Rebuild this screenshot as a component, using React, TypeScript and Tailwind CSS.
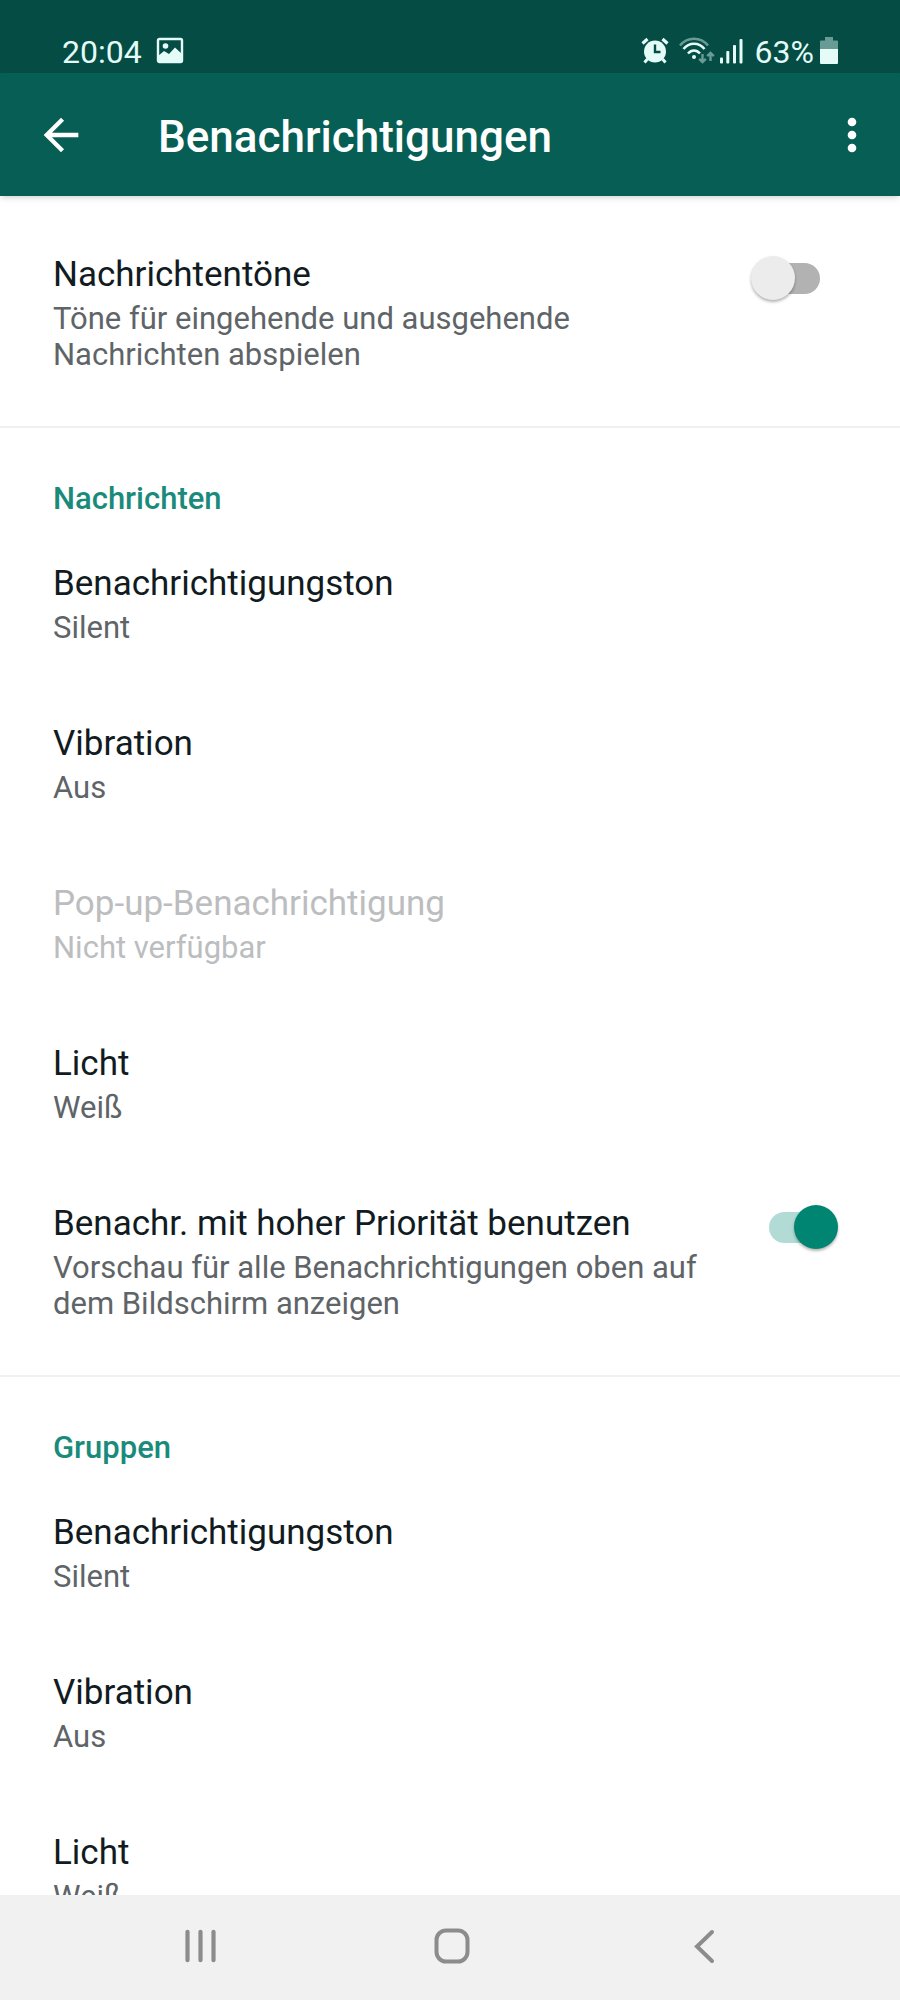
import { useState } from 'react'
import { MdArrowBack, MdMoreVert } from 'react-icons/md'

type Option = {
  title: string
  value: string
  disabled?: boolean
}

const messageOptions: Option[] = [
  { title: 'Benachrichtigungston', value: 'Silent' },
  { title: 'Vibration', value: 'Aus' },
  { title: 'Pop-up-Benachrichtigung', value: 'Nicht verfügbar', disabled: true },
  { title: 'Licht', value: 'Weiß' },
]

const groupOptions: Option[] = [
  { title: 'Benachrichtigungston', value: 'Silent' },
  { title: 'Vibration', value: 'Aus' },
  { title: 'Licht', value: 'Weiß' },
]

function StatusBar() {
  return (
    <div className="flex h-[73px] shrink-0 items-end justify-between bg-[#054d44] px-[62px] pb-2 text-[32px] leading-[26px] text-[#e4fbf8]">
      <div className="flex items-end gap-3.5">
        <span>20:04</span>
        {/* picture */}
        <svg width="28" height="28" viewBox="0 0 28 28" fill="none">
          <rect x="2" y="2" width="24" height="23" rx="1.5" stroke="currentColor" strokeWidth="2.4" />
          <circle cx="9.5" cy="9" r="2.8" fill="currentColor" />
          <path d="M2 19l6-5 5 3 6-6.5 7 6.500V25H2z" fill="currentColor" />
        </svg>
      </div>
      <div className="flex items-end">
        {/* alarm */}
        <svg width="28" height="28" viewBox="0 0 28 28" fill="none" className="mr-2.5">
          <path d="M1.500 6.500L6.500 2M26.500 6.500L21.500 2" stroke="currentColor" strokeWidth="3.200" />
          <path d="M6.500 22L3.500 25.500M21.500 22l3 3.500" stroke="currentColor" strokeWidth="3" />
          <circle cx="14" cy="14.500" r="11" fill="currentColor" />
          <path d="M14 7.500V15h5.500" stroke="#054d44" strokeWidth="2.400" />
        </svg>
        {/* wifi */}
        <svg width="36" height="28" viewBox="0 0 36 28" fill="none" className="mr-1">
          <g stroke="currentColor" strokeWidth="2.500">
            <path d="M1 8.500C8.500-.5 21.500-.5 29 8.500" opacity=".45" />
            <path d="M4.500 12c5.500-7 15.500-7 21 0" />
            <path d="M9 16.500c3.500-4 8.500-4 12 0" />
          </g>
          <circle cx="15" cy="20" r="2" fill="currentColor" />
          <g stroke="currentColor" strokeWidth="2.400" opacity=".45">
            <path d="M23.500 17v8M20.200 21.800l3.300 3.300 3.300-3.300" />
            <path d="M31.500 24v-8M28.200 19.200l3.300-3.300 3.300 3.300" />
          </g>
        </svg>
        {/* mobile signal */}
        <svg width="24" height="28" viewBox="0 0 24 28" fill="currentColor" className="mr-3">
          <rect x="1" y="20.500" width="3" height="6" rx="1" />
          <rect x="7.300" y="14" width="3" height="12.500" rx="1" />
          <rect x="14" y="8" width="3" height="18.500" rx="1" />
          <rect x="20.500" y="2" width="3" height="24.500" rx="1" />
        </svg>
        <span className="mr-1.5">63%</span>
        {/* battery */}
        <svg width="18" height="28" viewBox="0 0 18 28" fill="currentColor">
          <path d="M5 0h8v3.500h4a1 1 0 011 1V12H0V4.500a1 1 0 011-1h4z" opacity=".45" />
          <path d="M0 12h18v14a1 1 0 01-1 1H1a1 1 0 01-1-1z" />
        </svg>
      </div>
    </div>
  )
}

function Header() {
  return (
    <header className="z-10 flex h-[123px] shrink-0 items-center bg-[#075e54] pr-[22px] pl-[35px] text-white shadow-md">
      <button type="button" aria-label="Zurück">
        <MdArrowBack size={52} />
      </button>
      <h1 className="ml-[71px] flex-1 pt-1 text-[44px] font-medium">Benachrichtigungen</h1>
      <button type="button" aria-label="Weitere Optionen">
        <MdMoreVert size={52} />
      </button>
    </header>
  )
}

function OptionRow({ title, value, disabled }: Option) {
  return (
    <button
      type="button"
      disabled={disabled}
      className="group block w-full px-[53px] py-[38px] text-left"
    >
      <span className="block text-[35px] leading-[44px] text-[#111b21] group-disabled:text-[#bbbdbf]">
        {title}
      </span>
      <span className="mt-1 block text-[31px] leading-9 text-[#5e6467] group-disabled:text-[#bbbdbf]">
        {value}
      </span>
    </button>
  )
}

function SwitchRow({ title, text, initial }: { title: string; text: string; initial: boolean }) {
  const [on, setOn] = useState(initial)

  return (
    <label className="flex items-start gap-12 py-[38px] pr-[62px] pl-[53px]">
      <span className="flex-1">
        <span className="block text-[35px] leading-[44px] text-[#111b21]">{title}</span>
        <span className="mt-1 block text-[31px] leading-9 text-[#5e6467]">{text}</span>
      </span>
      <span className="relative mt-[3px] flex h-11 w-[87px] items-center justify-center">
        <input
          type="checkbox"
          role="switch"
          checked={on}
          onChange={(e) => setOn(e.target.checked)}
          className="peer absolute inset-0 appearance-none"
        />
        <span className="h-[31px] w-[51px] rounded-full bg-[#b2b2b2] peer-checked:bg-[#b2dbd5]" />
        <span className="absolute left-0 size-11 rounded-full bg-[#ececec] shadow-[0_2px_3px_rgba(0,0,0,0.3)] transition-transform peer-checked:translate-x-[43px] peer-checked:bg-[#008573]" />
      </span>
    </label>
  )
}

function SectionTitle({ children }: { children: string }) {
  return (
    <h2 className="px-[53px] pt-[34px] pb-[7px] text-[31px] leading-9 font-medium text-[#1a8b7b]">
      {children}
    </h2>
  )
}

function NavBar() {
  return (
    <nav className="grid h-[105px] shrink-0 grid-cols-3 items-center justify-items-center bg-[#f1f1f1] pr-[72px] pl-[76px] pb-1 text-[#8c8c8c]">
      <button type="button" aria-label="Letzte Apps">
        <svg width="36" height="36" viewBox="0 0 36 36" stroke="currentColor" strokeWidth="4.200" strokeLinecap="round">
          <path d="M4.500 3.800v28.400M17.500 3.800v28.400M30.500 3.800v28.400" />
        </svg>
      </button>
      <button type="button" aria-label="Startbildschirm">
        <svg width="36" height="36" viewBox="0 0 36 36" fill="none" stroke="currentColor" strokeWidth="4">
          <rect x="2.500" y="2.500" width="31" height="31" rx="9.500" />
        </svg>
      </button>
      <button type="button" aria-label="Zurück">
        <svg width="36" height="36" viewBox="0 0 36 36" fill="none" stroke="currentColor" strokeWidth="4" strokeLinecap="round">
          <path d="M27 4L12 18.500 27 33" />
        </svg>
      </button>
    </nav>
  )
}

export default function App() {
  return (
    <div className="flex h-screen flex-col bg-white font-[Roboto,sans-serif]">
      <StatusBar />
      <Header />

      <main className="min-h-0 flex-1 overflow-y-auto [scrollbar-width:none]">
        <section className="border-b-2 border-[#f0f0f0] pt-[19px] pb-[15px]">
          <SwitchRow
            title="Nachrichtentöne"
            text="Töne für eingehende und ausgehende Nachrichten abspielen"
            initial={false}
          />
        </section>

        <section className="border-b-2 border-[#f0f0f0] pt-[19px] pb-[15px]">
          <SectionTitle>Nachrichten</SectionTitle>
          {messageOptions.map((option) => (
            <OptionRow key={option.title} {...option} />
          ))}
          <SwitchRow
            title="Benachr. mit hoher Priorität benutzen"
            text="Vorschau für alle Benachrichtigungen oben auf dem Bildschirm anzeigen"
            initial={true}
          />
        </section>

        <section className="pt-[19px] pb-[15px]">
          <SectionTitle>Gruppen</SectionTitle>
          {groupOptions.map((option) => (
            <OptionRow key={option.title} {...option} />
          ))}
        </section>
      </main>

      <NavBar />
    </div>
  )
}
